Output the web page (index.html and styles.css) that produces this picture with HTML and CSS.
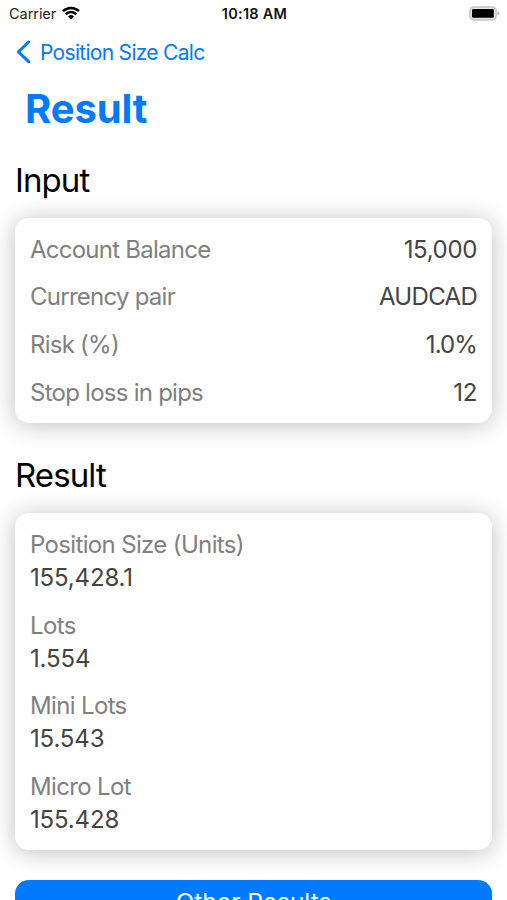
FILE: index.html
```html
<!DOCTYPE html>
<html lang="en">
<head>
<meta charset="utf-8">
<title>Position Size Calc</title>
<link rel="stylesheet" href="styles.css">
</head>
<body>
<header class="status">
  <div class="carrier"><span class="carrier-name">Carrier</span>
    <svg class="wifi" viewBox="0 0 18 14"><path d="M9 13.6 6 10.4a4.3 4.3 0 0 1 6 0z" fill="#000"/><path d="M1 5.2a11.4 11.4 0 0 1 16 0M3.7 8.3a7.5 7.5 0 0 1 10.6 0" fill="none" stroke="#000" stroke-width="2.5"/></svg>
  </div>
  <span class="time">10:18 AM</span>
  <svg class="battery" viewBox="0 0 31 15"><rect x=".9" y=".9" width="26.2" height="13" rx="4" fill="#e6e6e6" stroke="#c4c4c4" stroke-width="1.5"/><rect x="3" y="3" width="21.8" height="8.8" rx="1.2"/><path d="M28.5 5q2 .7 2 2.3t-2 2.3z" fill="#b5b5b5"/></svg>
</header>
<nav class="nav">
  <svg class="chevron" viewBox="0 0 15 24"><path d="M12.7 2 2.4 11.8l10.3 9.9" fill="none" stroke="#007aff" stroke-width="3" stroke-linecap="round" stroke-linejoin="round"/></svg>
  <span class="nav-label">Position Size Calc</span>
</nav>
<h1 class="title"><span>Result</span></h1>
<main>
  <h2 class="heading heading-input"><span>Input</span></h2>
  <section class="card inputs">
    <div class="row"><span class="label">Account Balance</span><span class="value">15,000</span></div>
    <div class="row"><span class="label">Currency pair</span><span class="value code">AUDCAD</span></div>
    <div class="row"><span class="label">Risk (%)</span><span class="value percent">1.0%</span></div>
    <div class="row"><span class="label">Stop loss in pips</span><span class="value">12</span></div>
  </section>
  <h2 class="heading heading-result"><span>Result</span></h2>
  <section class="card results">
    <div class="item"><span class="label">Position Size (Units)</span><span class="value">155,428.1</span></div>
    <div class="item"><span class="label">Lots</span><span class="value">1.554</span></div>
    <div class="item"><span class="label">Mini Lots</span><span class="value">15.543</span></div>
    <div class="item"><span class="label">Micro Lot</span><span class="value">155.428</span></div>
  </section>
  <button class="other">Other Results</button>
</main>
</body>
</html>
```
FILE: styles.css
```css
* { box-sizing: border-box; margin: 0; padding: 0; }
body {
  height: 900px;
  overflow: hidden;
  background: #fff;
  color: #000;
  font-family: Inter, "Liberation Sans", sans-serif;
}
.status {
  display: grid;
  grid-template-columns: 1fr auto 1fr;
  align-items: center;
  height: 27px;
  padding: 0 7px 0 9px;
  font-size: 14.5px;
}
.carrier { display: flex; align-items: center; gap: 6px; color: #222; }
.carrier-name { letter-spacing: -.05px; }
.wifi { width: 18px; height: 14px; margin-top: -2px; }
.time { font-weight: 600; font-size: 14.5px; letter-spacing: .25px; color: #111; }
.battery { width: 31px; height: 15px; justify-self: end; }
.nav {
  display: flex;
  align-items: center;
  gap: 9px;
  height: 50px;
  padding-left: 16px;
  color: #007aff;
  font-size: 21px;
  letter-spacing: -.7px;
}
.chevron { width: 15px; height: 24px; }
.title {
  padding-left: 25px;
  color: #007aff;
  font-size: 40px;
  line-height: 64px;
  font-weight: 700;
  letter-spacing: -.1px;
}
main { padding: 0 15px; }
.heading { font-size: 33px; font-weight: 400; line-height: 40px; letter-spacing: -.9px; }
.heading-input { margin: 19px 0 18px; }
.heading-result { margin: 32px 0 18px; }
.card {
  border-radius: 14px;
  padding: 0 15px;
  background: #fff;
  box-shadow: 0 2px 24px rgba(0, 0, 0, .26);
  font-size: 24px;
}
.inputs { height: 205px; padding-top: 8px; }
.row { display: flex; justify-content: space-between; align-items: center; height: 47.6px; line-height: 28px; }
.label { color: #808080; letter-spacing: -.75px; }
.value { color: #444; letter-spacing: -.35px; }
.code { letter-spacing: -.7px; }
.percent { letter-spacing: -.9px; }
.results { height: 337px; padding-top: 15px; }
.results .label { letter-spacing: -.65px; }
.results .value { letter-spacing: -.15px; }
.item { display: flex; flex-direction: column; height: 80.6px; line-height: 33px; }
.other {
  display: block;
  width: 100%;
  height: 60px;
  margin-top: 30px;
  padding-bottom: 16px;
  border: 0;
  border-radius: 14px;
  background: #007aff;
  color: #fff;
  font: 400 24.5px/1 Inter, "Liberation Sans", sans-serif;
}
```
